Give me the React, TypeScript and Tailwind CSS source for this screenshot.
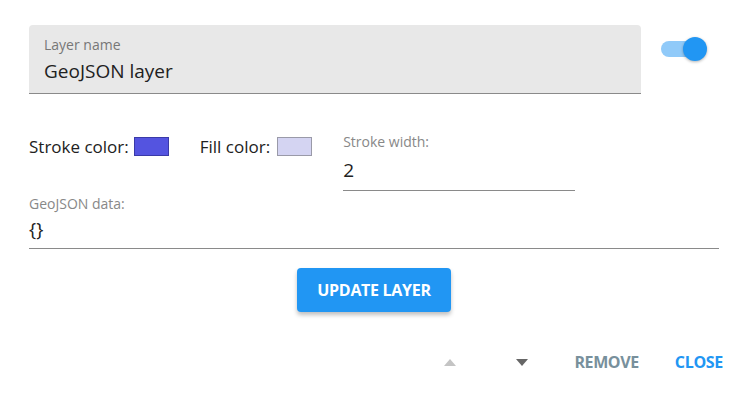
import React from "react";

export default function App() {
  return (
    <div className="w-[748px] h-[402px] bg-white text-[#212121] font-['Open_Sans',sans-serif] pt-[25px] px-[29px] flex flex-col">
      {/* Row 1 */}
      <div className="flex items-start">
        <div className="w-[612px] h-[69px] bg-[#e8e8e8] rounded-t-[4px] border-b border-[#8a8a8a] pl-[15px] pt-[10px] flex flex-col">
          <span className="text-[14px] leading-[20px] text-[#777]">Layer name</span>
          <span className="text-[19px] leading-[28px] mt-[2px]">GeoJSON layer</span>
        </div>
        <div className="relative ml-[20px] mt-[12px] w-[48px] h-[24px]">
          <div className="absolute left-0 top-[4px] w-[42px] h-[16px] rounded-full bg-[#90caf9]" />
          <div className="absolute left-[22px] top-0 w-[24px] h-[24px] rounded-full bg-[#2196f3] shadow-[0_1px_3px_rgba(0,0,0,0.3)]" />
        </div>
      </div>

      {/* Row 2 */}
      <div className="flex items-start mt-[37px] h-[60px]">
        <div className="flex items-center h-[29px] mt-[1px] text-[17px]">
          <span>Stroke color:</span>
          <span className="ml-[5px] w-[35px] h-[19px] bg-[#5454e0] border border-[#3a3aa8]" />
          <span className="ml-[31px]">Fill color:</span>
          <span className="ml-[7px] w-[35px] h-[19px] bg-[#d4d4f2] border border-[#9a9aa8]" />
        </div>
        <div className="ml-[31px] w-[232px] h-[60px] border-b border-[#8a8a8a] flex flex-col">
          <span className="text-[14px] leading-[20px] text-[#888] mt-[1px]">Stroke width:</span>
          <span className="text-[19px] leading-[28px] mt-[4px]">2</span>
        </div>
      </div>

      {/* Row 3 */}
      <div className="mt-[3px] w-[690px] h-[55px] border-b border-[#8a8a8a] flex flex-col">
        <span className="text-[14px] leading-[20px] text-[#888]">GeoJSON data:</span>
        <span className="text-[19px] leading-[28px] mt-[1px]">{"{}"}</span>
      </div>

      {/* Button */}
      <div className="flex justify-center mt-[19px] -ml-[29px] w-[748px]">
        <button className="w-[154px] h-[44px] rounded-[4px] bg-[#2196f3] text-white font-bold text-[16px] tracking-[-0.3px] shadow-[0_3px_4px_rgba(0,0,0,0.25)]">
          UPDATE LAYER
        </button>
      </div>

      {/* Actions */}
      <div className="flex items-center justify-end mt-[32px] h-[36px] -mr-[4px]">
        <div className="w-[70px] h-[36px] flex items-center justify-center">
          <svg width="12" height="7" viewBox="0 0 12 7"><path d="M0 7 L6 0 L12 7 Z" fill="#c4c4c4" /></svg>
        </div>
        <div className="w-[70px] h-[36px] ml-[2px] flex items-center justify-center">
          <svg width="12" height="7" viewBox="0 0 12 7"><path d="M0 0 L6 7 L12 0 Z" fill="#666" /></svg>
        </div>
        <span className="ml-[17px] font-bold text-[16px] tracking-[-0.4px] text-[#78909c]">REMOVE</span>
        <span className="ml-[36px] font-bold text-[16px] tracking-[-0.3px] text-[#2196f3]">CLOSE</span>
      </div>
    </div>
  );
}
